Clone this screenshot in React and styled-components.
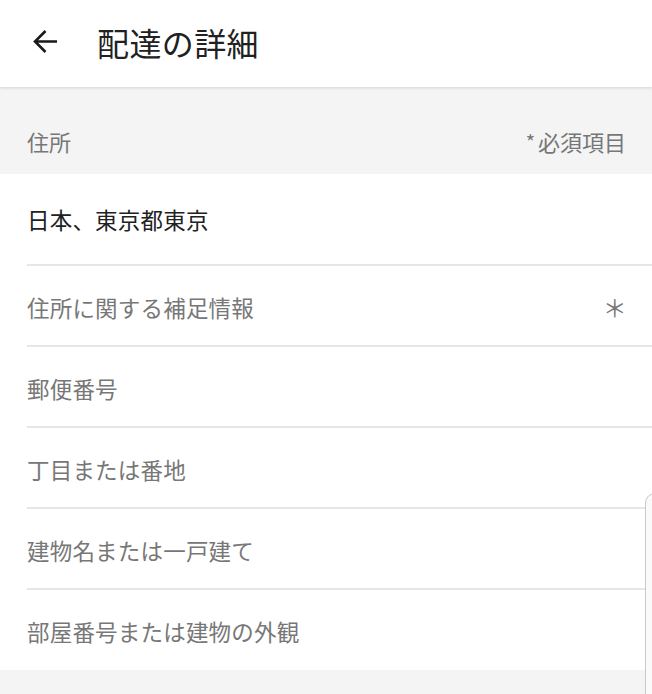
import React from "react";
import styled, { createGlobalStyle } from "styled-components";

const Global = createGlobalStyle`
  html, body { margin: 0; padding: 0; background: #ffffff; }
  body { font-family: "Noto Sans CJK JP", "Noto Sans", sans-serif; }
  * { box-sizing: border-box; }
`;

const Page = styled.div`
  position: relative;
  width: 652px;
  height: 694px;
  overflow: hidden;
  background: #ffffff;
  display: flex;
  flex-direction: column;
`;

const Header = styled.header`
  height: 87px;
  flex: none;
  display: flex;
  align-items: center;
  padding: 0 0 4px 32px;
  gap: 38px;
  background: #ffffff;
  position: relative;
  z-index: 2;
  box-shadow: 0 1px 3px rgba(0, 0, 0, 0.14);
`;

const BackButton = styled.button`
  border: 0;
  background: none;
  padding: 0;
  width: 27px;
  height: 27px;
  display: flex;
  align-items: center;
  justify-content: center;
  color: #212121;
`;

const Title = styled.h1`
  margin: 0;
  font-size: 32px;
  font-weight: 400;
  color: #212121;
  line-height: 40px;
  letter-spacing: 0.4px;
`;

const SectionHeader = styled.div`
  height: 87px;
  flex: none;
  background: #f4f4f4;
  display: flex;
  justify-content: space-between;
  align-items: flex-start;
  padding: 39px 26px 0 27px;
  font-size: 22px;
  line-height: 30px;
  color: #777777;
`;

const Required = styled.span`
  display: flex;
  align-items: flex-start;
  gap: 3px;
`;

const Star = styled.span`
  font-size: 20px;
  line-height: 26px;
  margin-top: 3px;
`;

const Row = styled.div`
  height: ${(p) => p.$h}px;
  flex: none;
  margin-left: 27px;
  padding: ${(p) => (p.$first ? "0" : "2px")} 25px 0 0;
  border-top: ${(p) => (p.$first ? "none" : "2px solid #e6e6e6")};
  display: flex;
  align-items: center;
  justify-content: space-between;
  font-size: 22.5px;
  line-height: 30px;
  letter-spacing: 0.2px;
  color: ${(p) => (p.$filled ? "#212121" : "#777777")};
`;

const Mark = styled.span`
  font-size: 24px;
  color: #777777;
`;

const Footer = styled.div`
  flex: 1;
  background: #f4f4f4;
`;

const Peek = styled.div`
  position: absolute;
  left: 645px;
  top: 493px;
  width: 40px;
  height: 260px;
  border: 1.5px solid #c9c9c9;
  border-radius: 10px;
  background: #fafafa;
  z-index: 3;
`;

const rows = [
  { text: "日本、東京都東京", filled: true, h: 90 },
  { text: "住所に関する補足情報", mark: true, h: 81 },
  { text: "郵便番号", h: 81 },
  { text: "丁目または番地", h: 81 },
  { text: "建物名または一戸建て", h: 81 },
  { text: "部屋番号または建物の外観", h: 82 },
];

export default function App() {
  return (
    <>
      <Global />
      <Page>
        <Header>
          <BackButton aria-label="戻る">
            <svg width="27" height="27" viewBox="0 0 27 27" fill="none">
              <path
                d="M25 13.5H3M13.5 3L3 13.5L13.5 24"
                stroke="#1a1a1a"
                strokeWidth="2.6"
                strokeLinecap="butt"
                strokeLinejoin="miter"
              />
            </svg>
          </BackButton>
          <Title>配達の詳細</Title>
        </Header>
        <SectionHeader>
          <span>住所</span>
          <Required>
            <Star>*</Star>
            <span>必須項目</span>
          </Required>
        </SectionHeader>
        {rows.map((r, i) => (
          <Row key={r.text} $h={r.h} $first={i === 0} $filled={r.filled}>
            <span>{r.text}</span>
            {r.mark && <Mark>＊</Mark>}
          </Row>
        ))}
        <Footer />
        <Peek />
      </Page>
    </>
  );
}
